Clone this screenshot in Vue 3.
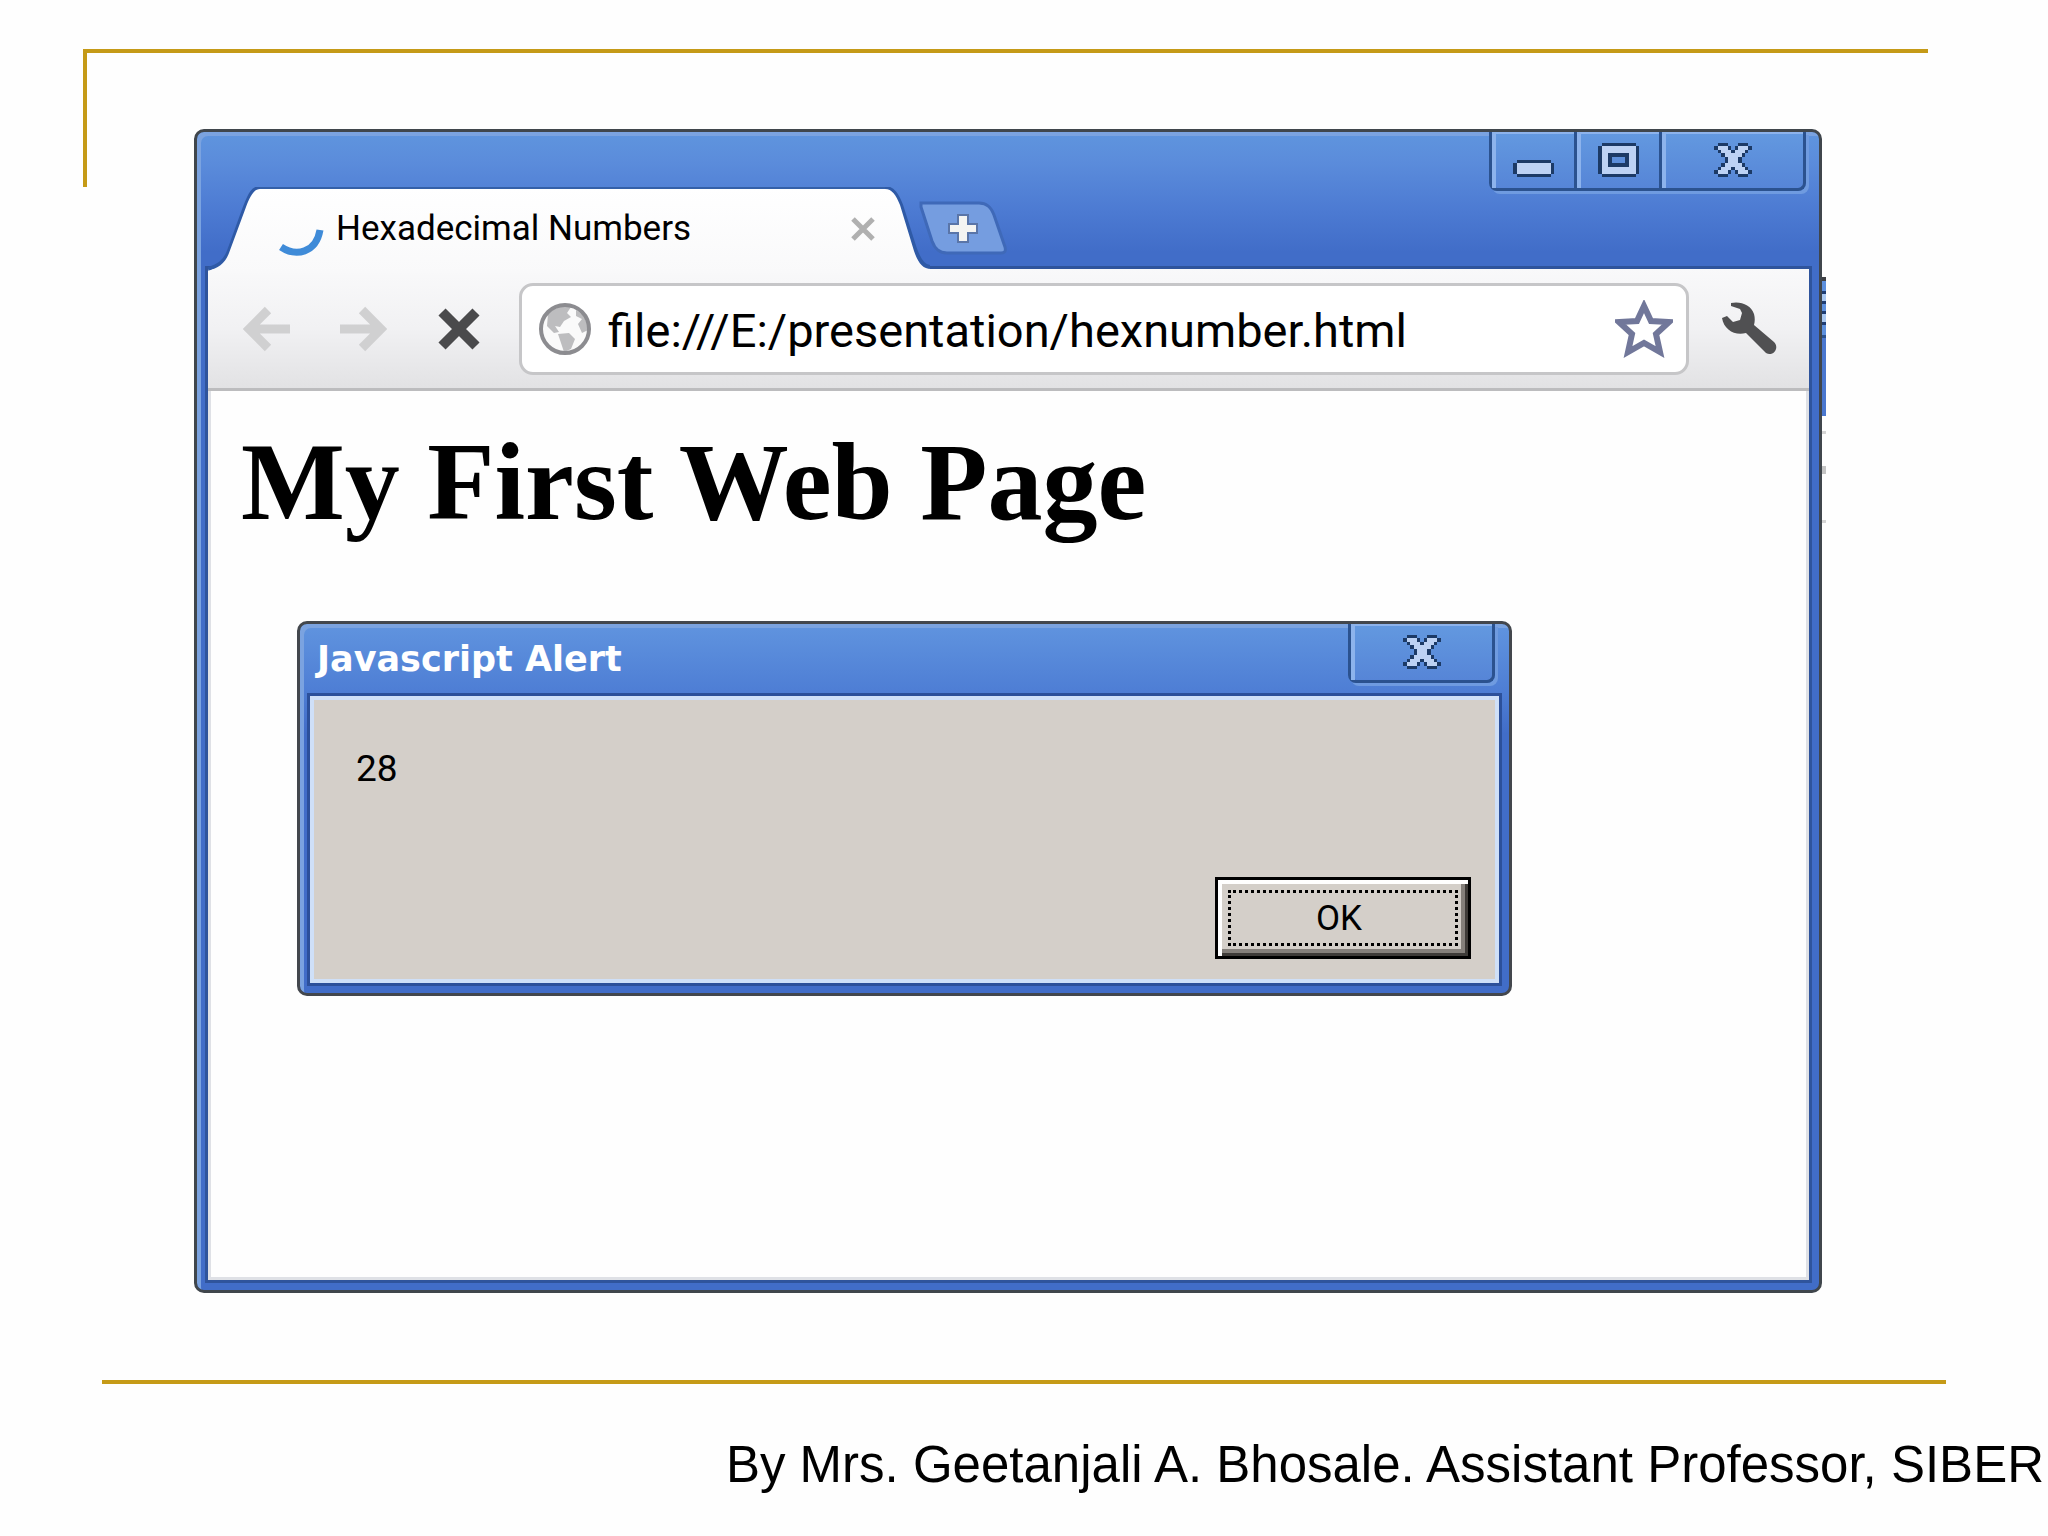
<script setup>
import { ref } from "vue";

const address = ref("file:///E:/presentation/hexnumber.html");

// caption glyphs: d = outline, l = fill, . = empty
const glyphs = {
  minimize: [
    ".dddddddddd.",
    "dlllllllllld",
    "dlllllllllld",
    "dlllllllllld",
    ".dddddddddd.",
  ],
  maximize: [
    ".dddddddddd.",
    "dlllllllllld",
    "dlllllllllld",
    "dllddddddlld",
    "dlld....dlld",
    "dlld....dlld",
    "dllddddddlld",
    "dlllllllllld",
    "dlllllllllld",
    ".dddddddddd.",
  ],
  close: [
    ".ddd...ddd.",
    "dllld.dllld",
    ".dllldllld.",
    "..dllllld..",
    "...dllld...",
    "...dllld...",
    "..dllllld..",
    ".dllldllld.",
    "dllld.dllld",
    ".ddd...ddd.",
  ],
};

function cells(name) {
  return glyphs[name].flatMap((row, y) =>
    [...row].map((c, x) => ({ x, y, c })).filter((p) => p.c !== ".")
  );
}

function box(name) {
  return `0 0 ${glyphs[name][0].length} ${glyphs[name].length}`;
}
</script>

<template>
  <div class="slide">
    <div class="corner"></div>

    <main class="window">
      <div class="strip">
        <div class="tab">
          <svg class="slope-left" viewBox="0 0 52 86">
            <defs>
              <linearGradient id="tab-fade" x1="0" y1="0" x2="0" y2="1">
                <stop offset="0" stop-color="#fff" />
                <stop offset="1" stop-color="#f9f9fa" />
              </linearGradient>
            </defs>
            <path class="edge" d="M0 82C10 79 17 75 21 64L37 20C42 7 45 1 52 1" />
            <path class="face" d="M0 86V84C10 81 17 77 21 66L38 20C42 9 46 2 52 2V86Z" />
          </svg>
          <div class="tab-face">
            <svg class="spinner" viewBox="0 0 46 30">
              <path d="M3 19C18 29 38 25 42 2" />
            </svg>
            <span class="tab-title">Hexadecimal Numbers</span>
            <button class="tab-close" aria-label="Close tab">
              <svg viewBox="0 0 26 26">
                <path d="M3 3L23 23M23 3L3 23" />
              </svg>
            </button>
          </div>
          <svg class="slope-right" viewBox="0 0 52 86">
            <path class="edge" d="M0 1C8 1 12 8 16 18L30 62C34 73 38 80 45 80" />
            <path class="face" d="M0 2C7 2 11 8 15 18L29 64C33 76 38 82 46 82H52V86H0Z" />
          </svg>
        </div>
        <button class="new-tab" aria-label="New tab">
          <svg viewBox="0 0 88 54">
            <path class="pad" d="M2 2H60C68 2 72 6 75 14L86 46C87 50 86 52 82 52H28C20 52 16 48 13 40L2 6Z" />
            <path class="plus" d="M39 14H49V23H58V32H49V41H39V32H30V23H39Z" />
          </svg>
        </button>
        <div class="captions">
          <button class="caption" aria-label="Minimize">
            <svg class="glyph low" width="41" height="17" :viewBox="box('minimize')">
              <rect v-for="p in cells('minimize')" :key="`${p.x}-${p.y}`" :class="p.c" :x="p.x" :y="p.y" width="1" height="1" />
            </svg>
          </button>
          <button class="caption" aria-label="Maximize">
            <svg class="glyph" width="41" height="34" :viewBox="box('maximize')">
              <rect v-for="p in cells('maximize')" :key="`${p.x}-${p.y}`" :class="p.c" :x="p.x" :y="p.y" width="1" height="1" />
            </svg>
          </button>
          <button class="caption wide" aria-label="Close">
            <svg class="glyph" width="38" height="34" :viewBox="box('close')">
              <rect v-for="p in cells('close')" :key="`${p.x}-${p.y}`" :class="p.c" :x="p.x" :y="p.y" width="1" height="1" />
            </svg>
          </button>
        </div>
      </div>

      <div class="client">
        <div class="toolbar">
          <button class="tool" aria-label="Back">
            <svg viewBox="0 0 48 48"><path class="arrow" d="M47 24H8M25 5L6 24L25 43" /></svg>
          </button>
          <button class="tool" aria-label="Forward">
            <svg viewBox="0 0 48 48"><path class="arrow" d="M1 24H40M23 5L42 24L23 43" /></svg>
          </button>
          <button class="tool" aria-label="Stop">
            <svg viewBox="0 0 48 48"><path class="stop" d="M7 7L41 41M41 7L7 41" /></svg>
          </button>
          <div class="omnibox">
            <svg class="globe" viewBox="0 0 54 54">
              <circle class="sea" cx="27" cy="27" r="24" />
              <path class="land" d="M10 12C16 5 26 3 33 5L29 11L33 15L26 19L22 25L17 24L21 30L16 31L9 24Z" />
              <path class="land" d="M38 8C45 12 50 20 50 28L44 31L40 22L44 17L38 14Z" />
              <path class="land" d="M20 32L31 31L37 37L33 47L26 50L23 41Z" />
              <circle class="rim" cx="27" cy="27" r="24" />
            </svg>
            <input v-model="address" class="address" type="text" aria-label="Address" spellcheck="false" />
            <button class="star" aria-label="Bookmark">
              <svg viewBox="0 0 58 58">
                <path d="M29 6L36 21L54 22L41 34L45 52L29 43L13 52L17 34L4 22L22 21Z" />
              </svg>
            </button>
          </div>
          <button class="wrench" aria-label="Settings">
            <svg viewBox="0 0 58 58">
              <path d="M11 3C21 1 31 5 34 14C35 18 35 21 34 25L54 42C60 48 53 57 46 53L26 33C15 36 4 30 2 18L7 16L13 22L20 20L22 13L20 9L11 6Z" />
            </svg>
          </button>
        </div>

        <div class="page">
          <h1>My First Web Page</h1>

          <section class="dialog" role="dialog" aria-labelledby="alert-title">
            <header class="dialog-bar">
              <h2 id="alert-title">Javascript Alert</h2>
              <div class="captions">
                <button class="caption wide" aria-label="Close alert">
                  <svg class="glyph" width="38" height="34" :viewBox="box('close')">
                    <rect v-for="p in cells('close')" :key="`${p.x}-${p.y}`" :class="p.c" :x="p.x" :y="p.y" width="1" height="1" />
                  </svg>
                </button>
              </div>
            </header>
            <div class="dialog-body">
              <p>28</p>
              <button class="ok"><span>OK</span></button>
            </div>
          </section>
        </div>
      </div>

      <!-- sliver of the window behind -->
      <div class="behind">
        <i class="behind-bar"></i>
        <i class="speck"></i>
        <i class="speck tall"></i>
        <i class="speck"></i>
      </div>
    </main>

    <footer>
      <p>By Mrs. Geetanjali A. Bhosale. Assistant Professor, SIBER</p>
    </footer>
  </div>
</template>

<style>
body {
  margin: 0;
  background: #fefefe;
}
</style>

<style scoped>
* {
  box-sizing: border-box;
}

button {
  padding: 0;
  border: 0;
  background: none;
  font: inherit;
  color: inherit;
}

svg {
  display: block;
  flex: none;
}

h1,
h2,
p {
  margin: 0;
}

.slide {
  display: flex;
  flex-direction: column;
  min-height: 100vh;
  overflow: hidden;
  color: #000;
  font-family: Roboto, "Noto Sans", sans-serif;
}

.corner {
  flex: none;
  height: 138px;
  margin: 49px 120px 0 83px;
  border-top: 4px solid #c59a17;
  border-left: 4px solid #c59a17;
}

/* browser window */
.window {
  position: relative;
  display: flex;
  flex: 1;
  flex-direction: column;
  margin: -58px 226px 0 194px;
  padding-bottom: 10px;
  border: 3px solid #40464c;
  border-radius: 10px;
  background: linear-gradient(#5f95de 0, #5b8cdb 30px, #4c7ad2 80px, #416dc8 120px, #416dc8 100%);
  box-shadow: inset 4px 4px 0 #7ba3e0;
}

.strip {
  display: flex;
  align-items: flex-end;
  height: 137px;
  padding-left: 11px;
}

.tab {
  position: relative;
  z-index: 1;
  display: flex;
  height: 86px;
  margin-bottom: -4px;
}

.slope-left,
.slope-right {
  width: 52px;
  height: 86px;
}

.face {
  fill: url(#tab-fade);
}

.edge {
  fill: none;
  stroke: #2f5aa6;
  stroke-width: 4;
}

.tab-face {
  display: flex;
  align-items: center;
  width: 625px;
  padding: 0 9px 4px 18px;
  border-top: 2px solid #3460a8;
  background: linear-gradient(#fff, #f9f9fa);
}

.spinner {
  width: 46px;
  height: 30px;
  margin: 28px 12px 0 0;
}

.spinner path {
  fill: none;
  stroke: #3f8bd8;
  stroke-width: 7;
}

.tab-title {
  flex: 1;
  font-size: 35px;
  line-height: 44px;
  white-space: nowrap;
}

.tab-close {
  width: 26px;
  height: 26px;
}

.tab-close path {
  stroke: #b0b0b0;
  stroke-width: 5;
}

.new-tab {
  width: 88px;
  height: 54px;
  margin: 0 0 14px -18px;
}

.pad {
  fill: #759de0;
  stroke: #3f69b8;
  stroke-width: 3;
}

.plus {
  fill: #f4f4f2;
  stroke: #5a75a8;
  stroke-width: 2;
}

.captions {
  display: flex;
  align-self: flex-start;
  margin: 0 13px 0 auto;
  border: 3px solid #2b528f;
  border-top: 0;
  border-radius: 0 0 8px 8px;
  background: linear-gradient(#6399e0, #5685d7);
  box-shadow: 3px 3px 0 #6f9be0;
}

.caption {
  display: flex;
  justify-content: center;
  width: 85px;
  height: 56px;
  padding-top: 11px;
  border-right: 3px solid #2b528f;
  box-shadow: inset 4px 2px 0 #8db3ec;
}

.caption.wide {
  width: 141px;
  border-right: 0;
}

.glyph {
  shape-rendering: crispEdges;
}

.glyph.low {
  margin-top: 17px;
}

.d {
  fill: #1c3a66;
}

.l {
  fill: #bdd2f4;
}

.client {
  display: flex;
  flex: 1;
  flex-direction: column;
  margin: 0 10px 0 11px;
  box-shadow: 0 0 0 3px #2f549c;
}

/* toolbar */
.toolbar {
  display: flex;
  align-items: center;
  height: 122px;
  padding: 0 31px 0 35px;
  border-bottom: 3px solid #bcbcbe;
  background: linear-gradient(#f9f9fa, #f1f1f3 50%, #e2e2e4);
}

.tool {
  width: 48px;
  height: 48px;
  margin-right: 48px;
}

.arrow {
  fill: none;
  stroke: #d0d0d1;
  stroke-width: 9;
}

.stop {
  fill: none;
  stroke: #4a4a4c;
  stroke-width: 10;
}

.omnibox {
  display: flex;
  flex: 1;
  align-items: center;
  min-width: 0;
  height: 92px;
  margin: 0 31px 0 -12px;
  padding: 0 13px 0 16px;
  border: 3px solid #c6c6c8;
  border-radius: 14px;
  background: #fff;
}

.globe {
  width: 54px;
  height: 54px;
}

.sea {
  fill: #fafafa;
}

.land {
  fill: #bdbdbf;
}

.rim {
  fill: none;
  stroke: #8c8c90;
  stroke-width: 4;
}

.address {
  flex: 1;
  min-width: 0;
  height: 72px;
  margin-left: 16px;
  padding: 4px 0 0;
  border: 0;
  outline: none;
  background: none;
  color: #000;
  font-family: inherit;
  font-size: 47px;
}

.star,
.wrench {
  width: 58px;
  height: 58px;
}

.star path {
  fill: #fff;
  stroke: #71779a;
  stroke-width: 6;
}

.wrench path {
  fill: #505052;
}

/* page */
.page {
  flex: 1;
  padding-top: 31px;
  border: 3px solid #dfe1e6;
  border-top: 0;
  background: #fefefe;
}

h1 {
  margin-left: 30px;
  font-family: "Liberation Serif", serif;
  font-size: 110px;
  font-weight: bold;
  line-height: 120px;
}

/* alert */
.dialog {
  max-width: 1215px;
  margin: 79px 0 0 86px;
  padding: 0 10px 10px;
  border: 3px solid #43474d;
  border-radius: 10px;
  background: linear-gradient(#6094df 0, #4f7fd5 64px, #416dc8 110px);
  box-shadow: inset 4px 4px 0 #7ba3e0;
}

.dialog-bar {
  display: flex;
  height: 72px;
}

.dialog-bar .captions {
  margin-right: 4px;
}

h2 {
  padding-left: 7px;
  color: #fff;
  font-family: "DejaVu Sans", sans-serif;
  font-size: 35px;
  font-weight: bold;
  line-height: 70px;
}

.dialog-body {
  display: flex;
  flex-direction: column;
  height: 287px;
  padding: 44px 24px 20px 42px;
  border: 4px solid #cfe0f8;
  background: #d4cfc9;
  box-shadow: 0 0 0 3px #2c509a;
}

.dialog-body p {
  font-size: 37px;
  line-height: 50px;
}

.ok {
  align-self: flex-end;
  width: 256px;
  height: 82px;
  margin-top: auto;
  padding: 10px;
  border: 3px solid #000;
  background: #d4cfc9;
  box-shadow: inset 4px 4px 0 #fff, inset -3px -3px 0 #3e3b38, inset -7px -7px 0 #85807b;
  font-size: 35px;
}

.ok span {
  display: flex;
  align-items: center;
  justify-content: center;
  height: 56px;
  padding-right: 8px;
  border: 3px dotted #000;
}

.behind {
  position: absolute;
  top: 145px;
  right: -7px;
  width: 4px;
}

.behind-bar {
  display: block;
  height: 139px;
  border-top: 4px solid #3f4044;
  background: linear-gradient(#5d90de 0 10px, #1f3d73 10px 13px, #a9c8f2 13px 20px, #1f3d73 20px 23px, #5d90de 23px 30px, #1f3d73 30px 33px, #a9c8f2 33px 41px, #1f3d73 41px 44px, #5d90de 44px 54px, #2b528f 54px 57px, #4a77cf 57px);
}

.speck {
  display: block;
  height: 3px;
  margin-top: 15px;
  background: #d5d5d5;
}

.speck.tall {
  height: 8px;
  margin: 32px 0 46px;
  background: #c4c4c4;
}

/* credits */
footer {
  flex: none;
  margin-top: 87px;
}

footer::before {
  content: "";
  display: block;
  height: 4px;
  margin: 0 102px;
  background: #c59a17;
}

footer p {
  padding: 51px 4px 41px 0;
  font-family: "Liberation Sans", Arial, sans-serif;
  font-size: 51px;
  line-height: 60px;
  text-align: right;
  white-space: nowrap;
}
</style>
